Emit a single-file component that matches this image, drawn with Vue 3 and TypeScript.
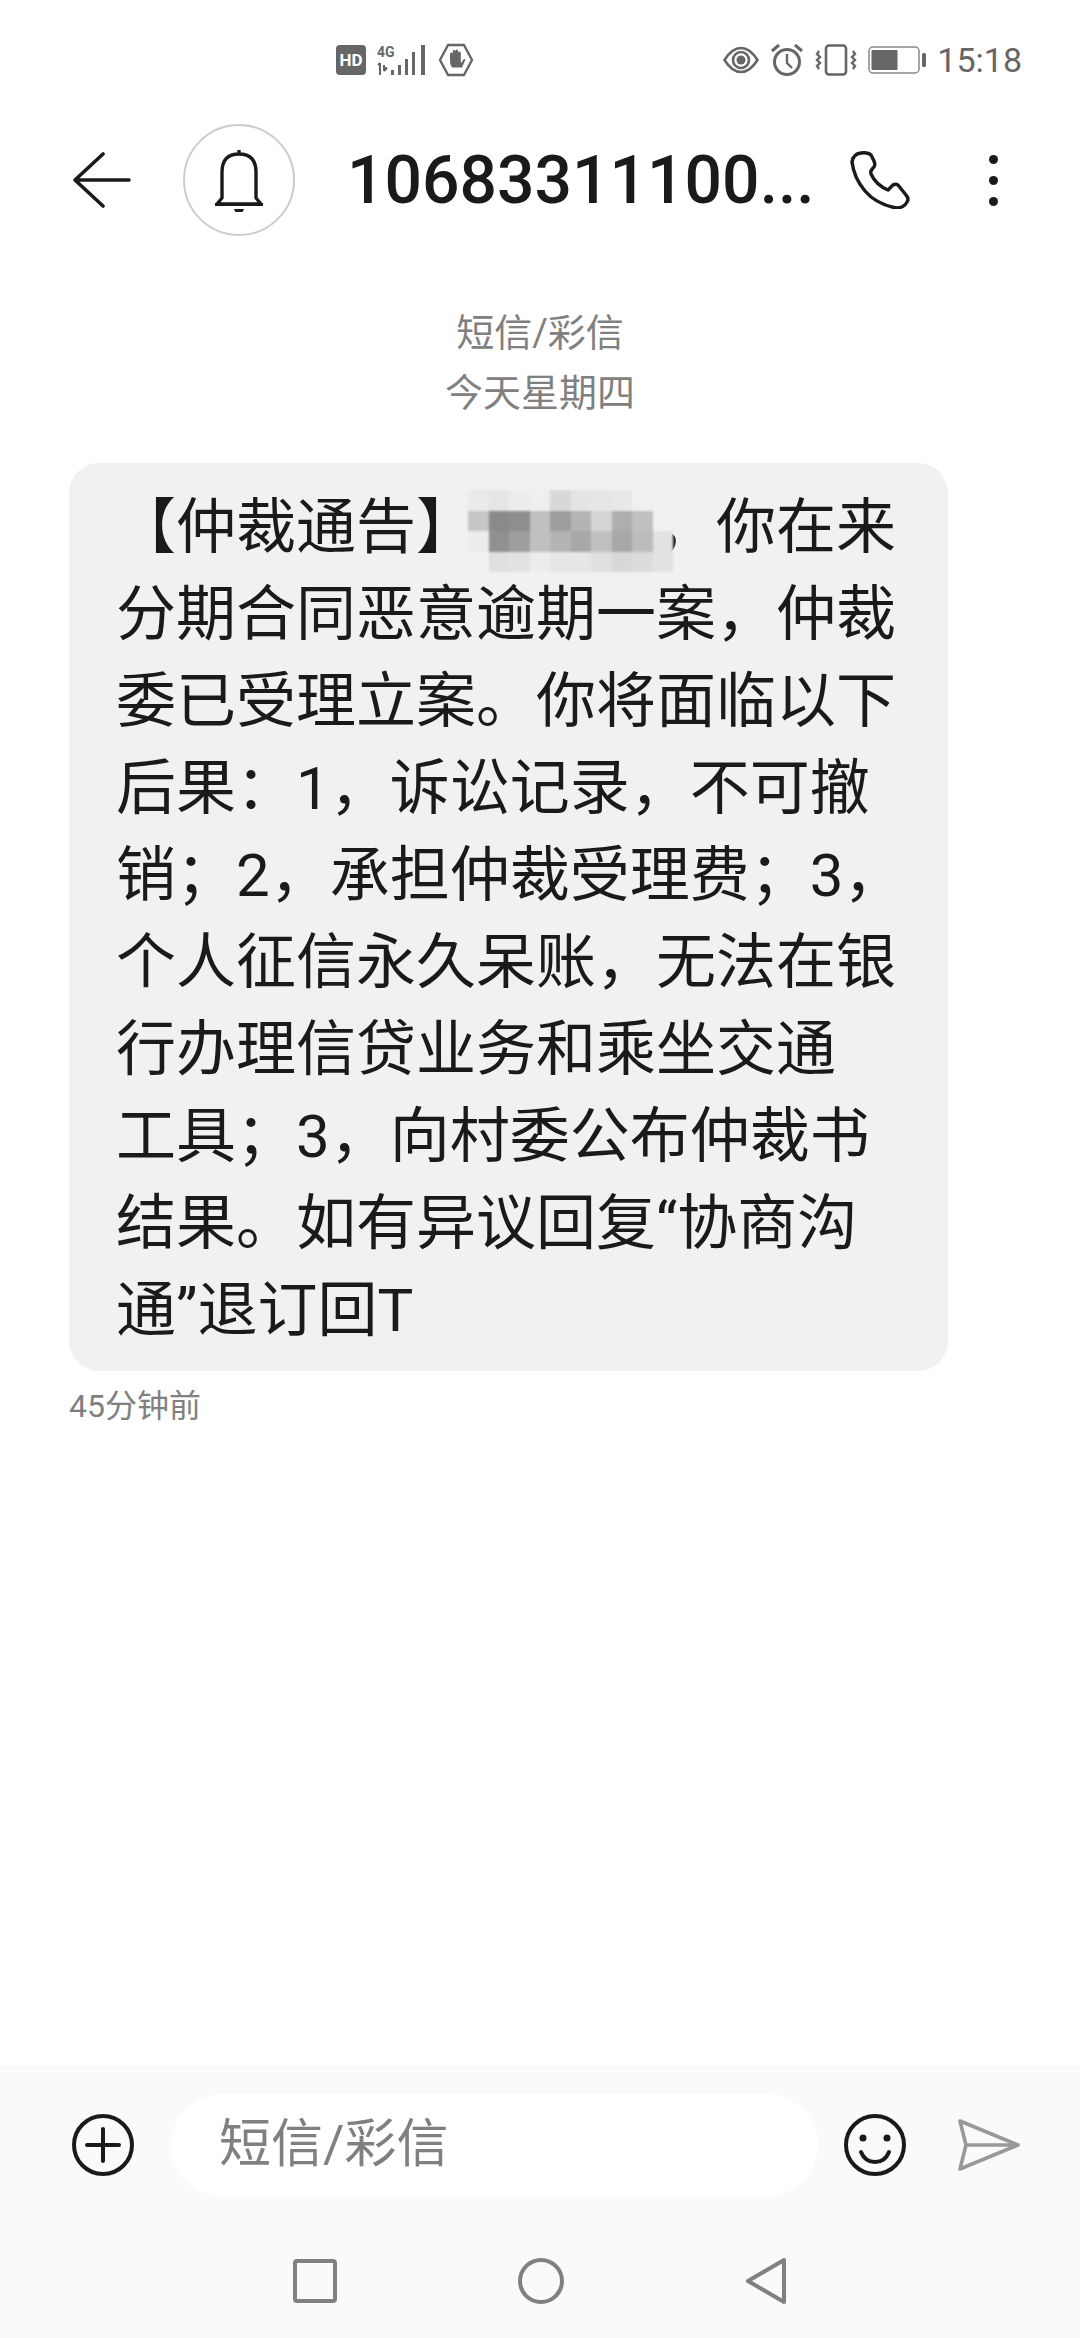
<script setup lang="ts">
// mosaic over the redacted name, one row per 20px band
const mosaic: string[][] = [
  ['eaeaea', 'e5e5e5', 'ececec', 'efefef', 'd8d8d8', 'e4e4e4', 'e6e6e6', 'e8e8e8', 'f0f0f0', 'f1f1f1'],
  ['c6c6c6', '8a8a8a', '8e8e8e', 'c0c0c0', '9e9e9e', 'b4b4b4', 'd4d4d4', 'aeaeae', 'c0c0c0', 'f1f1f1'],
  ['ececec', '909090', '9e9e9e', 'c0c0c0', 'b4b4b4', 'a8a8a8', 'c0c0c0', 'a8a8a8', 'bcbcbc', 'e2e2e2'],
  ['f1f1f1', 'e0e0e0', 'e2e2e2', 'ececec', 'e6e6e6', 'e6e6e6', 'e0e0e0', 'd8d8d8', 'dcdcdc', 'e2e2e2'],
]

const lines = [
  '分期合同恶意逾期一案，仲裁',
  '委已受理立案。你将面临以下',
  '后果：1，诉讼记录，不可撤',
  '销；2，承担仲裁受理费；3，',
  '个人征信永久呆账，无法在银',
  '行办理信贷业务和乘坐交通',
  '工具；3，向村委公布仲裁书',
  '结果。如有异议回复“协商沟',
  '通”退订回T',
]
</script>

<template>
  <div class="screen">
    <div class="status">
      <div class="status-group left">
        <svg width="30" height="30" viewBox="0 0 30 30">
          <rect width="30" height="30" rx="4" fill="#666" />
          <text x="15" y="21" text-anchor="middle" class="hd">HD</text>
        </svg>
        <svg width="50" height="32" viewBox="0 0 50 32">
          <text x="0" y="13" class="net">4G</text>
          <path d="M3 19v12M1 21l2-2M7 21v6M7 27l3-3M10 24h-3" stroke="#666" stroke-width="2" fill="none" />
          <rect x="14" y="26" width="3" height="5" fill="#666" />
          <rect x="21" y="21" width="3" height="10" fill="#666" />
          <rect x="28" y="15" width="3" height="16" fill="#666" />
          <rect x="35" y="8" width="3" height="23" fill="#666" />
          <rect x="44" y="1" width="4" height="30" fill="#666" />
        </svg>
        <svg width="36" height="34" viewBox="0 0 36 34">
          <path d="M10 2h16l8 15-8 15H10L2 17z" fill="none" stroke="#666" stroke-width="2.4" stroke-linejoin="round" />
          <path d="M12 17v-6q0-1.500 1.300-1.500t1.300 1.500V8.500q0-1.500 1.400-1.500t1.400 1.500V8q0-1.500 1.400-1.500T20.200 8v2q0-1.500 1.300-1.500t1.300 1.500v9q0 2 1.700-1l1-1.500q1-1 2 0l-3.500 8H14.500Q12 23 12 17z" fill="#666" />
        </svg>
      </div>
      <div class="status-group right">
        <svg width="36" height="28" viewBox="0 0 36 28">
          <path d="M1.500 14Q9 2 18 2t16.500 12Q27 26 18 26T1.500 14z" fill="none" stroke="#666" stroke-width="2.600" />
          <circle cx="18" cy="14" r="8" fill="none" stroke="#666" stroke-width="2.600" />
          <circle cx="18" cy="14" r="4.500" fill="#666" />
        </svg>
        <svg width="34" height="34" viewBox="0 0 34 34">
          <circle cx="17" cy="19" r="12.500" fill="none" stroke="#666" stroke-width="3" />
          <path d="M17 11v9l5 5" fill="none" stroke="#666" stroke-width="2.400" />
          <path d="M2 8l7-6M32 8l-7-6" fill="none" stroke="#666" stroke-width="3" />
        </svg>
        <svg width="42" height="32" viewBox="0 0 42 32">
          <rect x="11" y="1.500" width="20" height="29" rx="3" fill="none" stroke="#666" stroke-width="2.600" />
          <path d="M4 7l-2 3 3 3-3 3 3 3-3 3 2 3M38 7l2 3-3 3 3 3-3 3 3 3-2 3" fill="none" stroke="#666" stroke-width="2.400" />
        </svg>
        <svg width="58" height="28" viewBox="0 0 58 28">
          <rect x="1" y="1" width="50" height="26" rx="4" fill="none" stroke="#888" stroke-width="1.500" />
          <rect x="3.500" y="4" width="26" height="20" rx="1" fill="#666" />
          <rect x="54" y="7" width="4" height="14" rx="1.500" fill="#666" />
        </svg>
        <span class="time">15:18</span>
      </div>
    </div>

    <header class="header">
      <svg class="back" width="58" height="56" viewBox="0 0 58 56">
        <path d="M30 2L2 28l28 26M2 28h54" fill="none" stroke="#1a1a1a" stroke-width="3.600" stroke-linecap="round" stroke-linejoin="round" />
      </svg>
      <div class="avatar">
        <svg width="56" height="64" viewBox="0 0 56 64">
          <path d="M28 2v4M11 50V24Q11 6 28 6t17 18v26l5 6H6z" fill="none" stroke="#1a1a1a" stroke-width="3.400" stroke-linejoin="round" />
          <path d="M4 55h48v3H4zM23 61h10q-1 4-5 4t-5-4z" fill="#1a1a1a" />
        </svg>
      </div>
      <div class="title">10683311100...</div>
      <svg class="phone" width="60" height="58" viewBox="0 0 60 58">
        <path d="M11 2q-8 1-9 9 2 16 13 29t31 17q9 0 12-8 0-3-2-5L48 34q-4-2-7 2l-3 3Q26 34 21 23q-1-3 2-6 3-2 1-7l-3-6q-3-3-10-2z" fill="none" stroke="#1a1a1a" stroke-width="3.400" stroke-linejoin="round" />
      </svg>
      <div class="more"><i></i><i></i><i></i></div>
    </header>

    <main class="thread">
      <div class="sub">
        <div>短信/彩信</div>
        <div>今天星期四</div>
      </div>
      <div class="bubble">
        <div class="line">【仲裁通告】<span class="name"><span class="mosaic"><template v-for="(row, r) in mosaic" :key="r"><i v-for="(c, k) in row" :key="k" :style="{ background: '#' + c }"></i></template></span></span>，你在来</div>
        <div v-for="l in lines" :key="l" class="line">{{ l }}</div>
      </div>
      <div class="ago">45分钟前</div>
    </main>

    <footer class="footer">
      <div class="compose">
        <svg width="62" height="62" viewBox="0 0 62 62">
          <circle cx="31" cy="31" r="29" fill="none" stroke="#1a1a1a" stroke-width="4" />
          <path d="M31 15v32M15 31h32" stroke="#1a1a1a" stroke-width="4" stroke-linecap="round" />
        </svg>
        <div class="input">短信/彩信</div>
        <svg class="smile" width="62" height="62" viewBox="0 0 62 62">
          <circle cx="31" cy="31" r="29" fill="none" stroke="#1a1a1a" stroke-width="4" />
          <circle cx="19" cy="24" r="3.500" fill="#1a1a1a" />
          <circle cx="43" cy="24" r="3.500" fill="#1a1a1a" />
          <path d="M17 38q4 10 14 10t14-10" fill="none" stroke="#1a1a1a" stroke-width="4" stroke-linecap="round" />
        </svg>
        <svg class="send" width="64" height="54" viewBox="0 0 64 54">
          <path d="M3 3l58 24L3 51l6-24zM9 27h52" fill="none" stroke="#999" stroke-width="3.600" stroke-linejoin="round" />
        </svg>
      </div>
      <div class="nav">
        <svg width="44" height="44" viewBox="0 0 44 44">
          <rect x="2" y="2" width="40" height="40" rx="2" fill="none" stroke="#808080" stroke-width="4" />
        </svg>
        <svg width="46" height="48" viewBox="0 0 46 48">
          <circle cx="23" cy="24" r="21" fill="none" stroke="#808080" stroke-width="4" />
        </svg>
        <svg width="42" height="48" viewBox="0 0 42 48">
          <path d="M39 3v42L3 24z" fill="none" stroke="#808080" stroke-width="4" stroke-linejoin="round" />
        </svg>
      </div>
    </footer>
  </div>
</template>

<style scoped>
.screen {
  display: flex;
  flex-direction: column;
  width: 1080px;
  height: 2338px;
  overflow: hidden;
  background: #fff;
  font-family: Roboto, "Noto Sans CJK SC", sans-serif;
}

.status {
  display: flex;
  justify-content: space-between;
  align-items: center;
  height: 120px;
  padding: 0 58px 0 336px;
  box-sizing: border-box;
}

.status-group {
  display: flex;
  align-items: center;
}

.left {
  gap: 11px;
}

.right {
  gap: 11px;
}

.hd {
  fill: #fff;
  font: 700 17px Roboto, sans-serif;
}

.net {
  fill: #666;
  font: 700 14px Roboto, sans-serif;
}

.time {
  font-size: 34px;
  color: #666;
}

.header {
  display: flex;
  align-items: center;
  height: 120px;
  padding-left: 73px;
}

.avatar {
  display: flex;
  align-items: center;
  justify-content: center;
  width: 112px;
  height: 112px;
  margin-left: 52px;
  border: 2px solid #ccc;
  border-radius: 50%;
  box-sizing: border-box;
}

.title {
  width: 450px;
  margin-left: 52px;
  font-size: 66px;
  font-weight: 500;
  color: #1a1a1a;
  white-space: nowrap;
}

.phone {
  margin-left: 53px;
}

.more {
  display: flex;
  flex-direction: column;
  gap: 12px;
  margin-left: 79px;
}

.more i {
  width: 9px;
  height: 9px;
  border-radius: 50%;
  background: #1a1a1a;
}

.thread {
  flex: 1;
  padding: 63px 0 0 69px;
}

.sub {
  width: 942px;
  font-size: 38px;
  line-height: 60px;
  color: #808080;
  text-align: center;
}

.bubble {
  width: 879px;
  margin-top: 40px;
  padding: 21px 0 17px 47px;
  box-sizing: border-box;
  background: #f1f1f1;
  border-radius: 30px;
}

.line {
  font-size: 60px;
  line-height: 87px;
  color: #1a1a1a;
  white-space: nowrap;
}

.name {
  position: relative;
  display: inline-block;
  width: 180px;
  height: 60px;
  vertical-align: middle;
}

.mosaic {
  position: absolute;
  left: -8px;
  top: -12px;
  display: grid;
  grid-template-columns: repeat(10, 20.5px);
  grid-auto-rows: 20.5px;
  filter: blur(1px);
}

.ago {
  margin-top: 15px;
  font-size: 32px;
  line-height: 40px;
  color: #808080;
}

.footer {
  height: 273px;
  background: #fafafa;
}

.compose {
  display: flex;
  align-items: center;
  padding: 29px 0 0 72px;
}

.input {
  width: 647px;
  height: 102px;
  margin-left: 37px;
  padding-left: 48px;
  box-sizing: border-box;
  background: #fff;
  border-radius: 51px;
  font-size: 52px;
  line-height: 102px;
  color: #808080;
}

.smile {
  margin-left: 26px;
}

.send {
  margin-left: 51px;
}

.nav {
  display: flex;
  align-items: center;
  gap: 181px;
  margin-top: 61px;
  padding-left: 293px;
}
</style>

<style>
html,
body {
  background: #fff;
}
</style>
